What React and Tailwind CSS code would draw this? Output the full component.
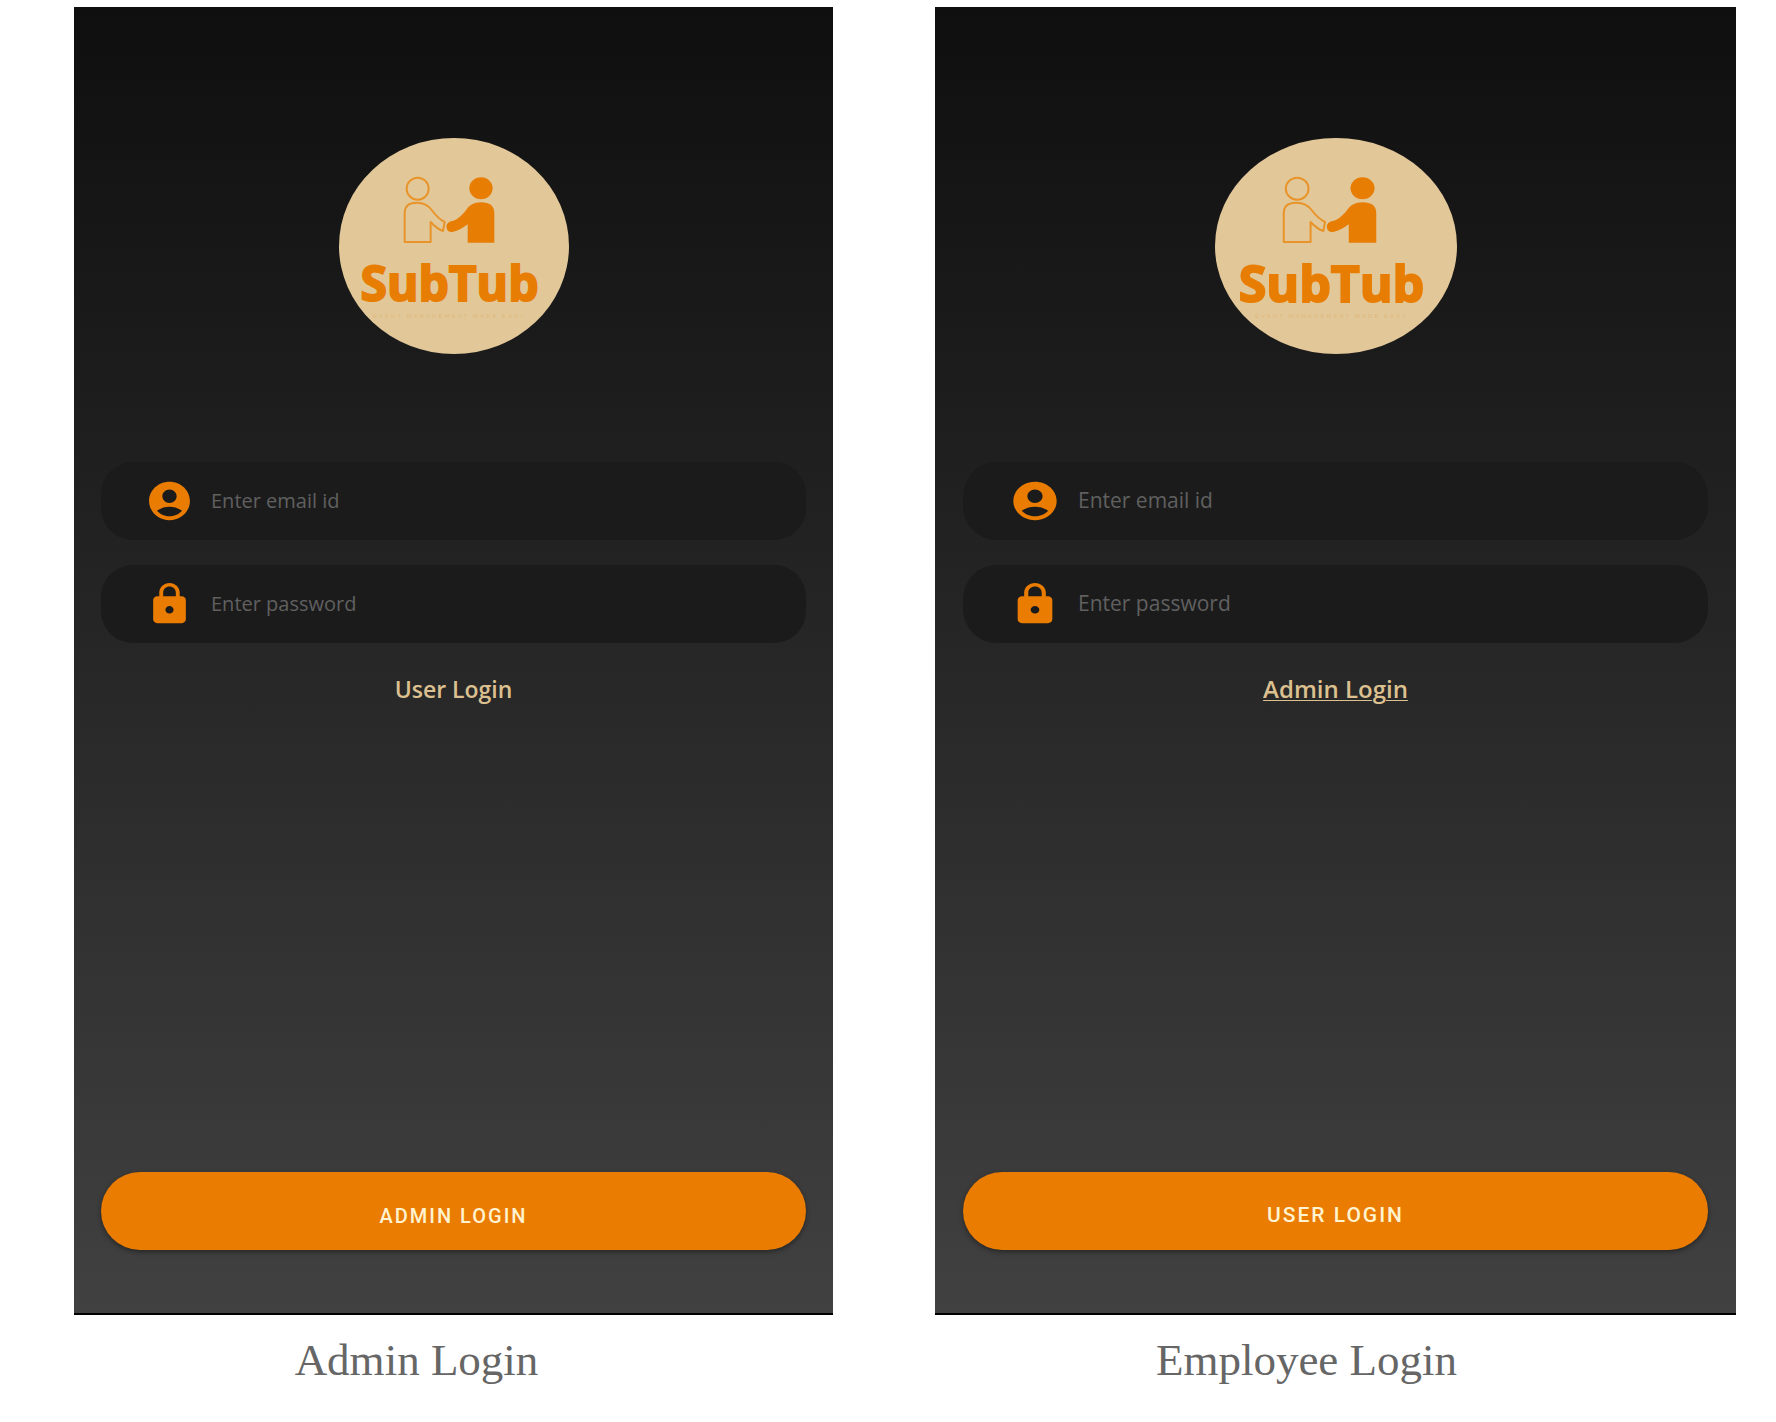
import { useId } from "react";

function PersonIcon({ className }) {
  return (
    <svg className={className} viewBox="0 0 24 24" preserveAspectRatio="none" fill="currentColor" aria-hidden="true">
      <path d="M12 2C6.48 2 2 6.48 2 12s4.48 10 10 10 10-4.48 10-10S17.52 2 12 2zm0 4c1.93 0 3.5 1.57 3.5 3.5S13.93 13 12 13s-3.5-1.57-3.5-3.5S10.07 6 12 6zm0 14c-2.03 0-4.43-.82-6.14-2.88C7.55 15.8 9.68 15 12 15s4.45.8 6.14 2.12C16.43 19.18 14.03 20 12 20z" />
    </svg>
  );
}

function LockIcon({ className }) {
  return (
    <svg className={className} viewBox="0 0 24 24" preserveAspectRatio="none" fill="currentColor" aria-hidden="true">
      <path d="M18 8h-1V6c0-2.76-2.24-5-5-5S7 3.24 7 6v2H6c-1.1 0-2 .9-2 2v10c0 1.1.9 2 2 2h12c1.1 0 2-.9 2-2V10c0-1.1-.9-2-2-2zM8.9 6c0-1.71 1.39-3.1 3.1-3.1s3.1 1.39 3.1 3.1v2H8.9V6zm3.1 11c-1.1 0-2-.9-2-2s.9-2 2-2 2 .9 2 2-.9 2-2 2z" />
    </svg>
  );
}

function Handshake({ className }) {
  return (
    <svg className={className} viewBox="245 168 282 204" preserveAspectRatio="none" aria-hidden="true">
      <g fill="none" stroke="#e8942a" strokeWidth="6" strokeLinejoin="round">
        <ellipse cx="292" cy="206" rx="33" ry="33" />
        <path d="M253 366V279C253 257 268 248 290 248C312 248 324 256 334 270C346 286 356 298 373 306L368 333C352 328 342 318 331 306V366Z" />
      </g>
      <g fill="#e87d04">
        <ellipse cx="482" cy="205" rx="35" ry="33" />
        <path d="M522 368V280C522 257 508 247 482 247C460 247 448 256 438 269C426 285 412 299 392 304C384 306 378 312 378 320C379 332 386 337 396 336C414 333 428 324 442 313V368Z" />
      </g>
    </svg>
  );
}

function Logo({ size, art, word }) {
  return (
    <div className={`flex flex-col items-center rounded-[50%] bg-[#e2c899] ${size}`}>
      <Handshake className={`h-[68px] ${art}`} />
      <div
        className={`mt-3 mr-2 font-['Open_Sans',sans-serif] leading-[54px] font-bold whitespace-nowrap text-[#e87d04] [-webkit-text-stroke:2px_#e87d04] ${word}`}
      >
        SubTub
      </div>
      <div className="mt-0.5 mr-2 font-['Liberation_Sans',sans-serif] text-[6px] leading-[8px] tracking-[2px] whitespace-nowrap text-[#dfb87c]">
        EVENT MANAGEMENT MADE EASY
      </div>
    </div>
  );
}

function Field({ icon: Icon, type, label, look }) {
  const id = useId();
  return (
    <div className={`flex h-[78px] items-center gap-[17px] bg-[#1b1b1b] pr-6 ${look.field}`}>
      <label htmlFor={id} aria-label={label} className="shrink-0 text-[#ea7c02]">
        <Icon className={`h-[46px] ${look.icon}`} />
      </label>
      <input
        id={id}
        type={type}
        placeholder={label}
        className={`min-w-0 flex-1 bg-transparent text-[#ccc] outline-none placeholder:text-[#606060] ${look.input}`}
      />
    </div>
  );
}

function LoginScreen({ caption, switchLabel, submitLabel, look }) {
  return (
    <figure className="flex min-w-0 flex-col">
      <form
        onSubmit={(e) => e.preventDefault()}
        className={`flex flex-1 flex-col border-b-2 border-black bg-linear-to-b from-[#0f0f0f] to-[#414141] pt-[131px] pb-[63px] font-['Open_Sans',sans-serif] ${look.screen}`}
      >
        <div className="flex justify-center">
          <Logo {...look.logo} />
        </div>
        <div className="mt-[108px] flex flex-col gap-[25px]">
          <Field icon={PersonIcon} type="email" label="Enter email id" look={look} />
          <Field icon={LockIcon} type="password" label="Enter password" look={look} />
        </div>
        <a href="#switch" className={`mt-8 self-center leading-7 font-semibold text-[#dcc08f] ${look.link}`}>
          {switchLabel}
        </a>
        <button
          type="submit"
          className={`mt-auto h-[78px] w-full rounded-full bg-[#ea7c02] pt-[10px] font-['Roboto',sans-serif] font-medium tracking-[2px] text-[#fff3d0] shadow-[0_2px_5px_rgba(0,0,0,0.4)] ${look.button}`}
        >
          {submitLabel}
        </button>
      </form>
      <figcaption
        className={`pt-[19px] pb-9 text-center font-['Liberation_Serif',serif] text-[45px] leading-[52px] text-[#666] ${look.caption}`}
      >
        {caption}
      </figcaption>
    </figure>
  );
}

const ADMIN_LOOK = {
  screen: "px-[27px]",
  logo: { size: "h-[216px] w-[230px] pt-[38px]", art: "w-[94px] mr-[9px]", word: "text-[48px]" },
  field: "rounded-[32px] pl-[44px]",
  icon: "w-[49px]",
  input: "text-[20px]",
  link: "text-[23px]",
  button: "text-[20px]",
  caption: "pr-[74px]",
};

const EMPLOYEE_LOOK = {
  screen: "px-7",
  logo: { size: "h-[216px] w-[242px] pt-[38px]", art: "w-[97px] mr-[13px]", word: "text-[50px]" },
  field: "rounded-[34px] pl-[46px]",
  icon: "w-[52px]",
  input: "text-[21px]",
  link: "text-[24px] underline decoration-1 underline-offset-2",
  button: "text-[21px]",
  caption: "pr-[58px]",
};

export default function App() {
  return (
    <main className="grid min-h-screen grid-cols-[759fr_801fr] gap-[102px] bg-white pt-[7px] pr-10 pl-[74px]">
      <LoginScreen caption="Admin Login" switchLabel="User Login" submitLabel="ADMIN LOGIN" look={ADMIN_LOOK} />
      <LoginScreen caption="Employee Login" switchLabel="Admin Login" submitLabel="USER LOGIN" look={EMPLOYEE_LOOK} />
    </main>
  );
}
